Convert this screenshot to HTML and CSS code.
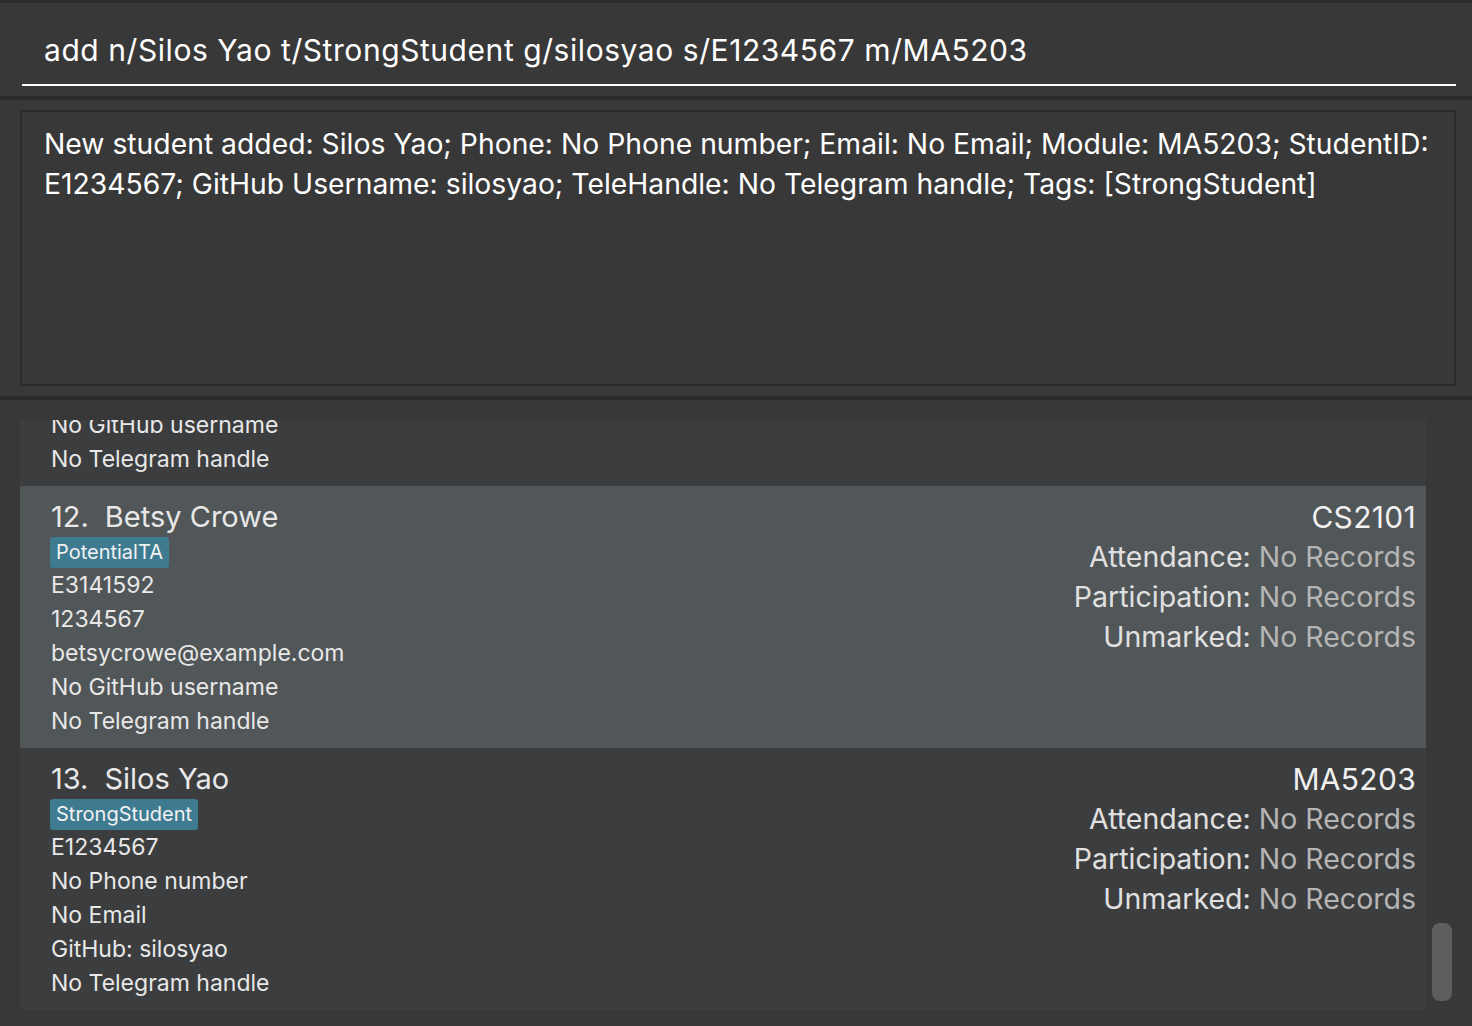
FILE: index.html
```html
<!DOCTYPE html>
<html>
<head>
<meta charset="utf-8">
<link rel="stylesheet" href="styles.css">
</head>
<body>
<div class="app">
  <div class="command-bar">
    <div class="command-input">add n/Silos Yao t/StrongStudent g/silosyao s/E1234567 m/MA5203</div>
  </div>
  <div class="result-area">
    <div class="result-box">New student added: Silos Yao; Phone: No Phone number; Email: No Email; Module: MA5203; StudentID: E1234567; GitHub Username: silosyao; TeleHandle: No Telegram handle; Tags: [StrongStudent]</div>
  </div>
  <div class="list-area">
    <div class="list-viewport">
      <div class="card partial">
        <div class="card-left">
          <div class="detail">No GitHub username</div>
          <div class="detail">No Telegram handle</div>
        </div>
      </div>
      <div class="card selected">
        <div class="card-left">
          <div class="name"><span class="idx">12.</span>Betsy Crowe</div>
          <div class="tags"><span class="tag">PotentialTA</span></div>
          <div class="detail">E3141592</div>
          <div class="detail">1234567</div>
          <div class="detail">betsycrowe@example.com</div>
          <div class="detail">No GitHub username</div>
          <div class="detail">No Telegram handle</div>
        </div>
        <div class="card-right">
          <div class="module">CS2101</div>
          <div class="stat">Attendance: <span class="val">No Records</span></div>
          <div class="stat">Participation: <span class="val">No Records</span></div>
          <div class="stat">Unmarked: <span class="val">No Records</span></div>
        </div>
      </div>
      <div class="card">
        <div class="card-left">
          <div class="name"><span class="idx">13.</span>Silos Yao</div>
          <div class="tags"><span class="tag">StrongStudent</span></div>
          <div class="detail">E1234567</div>
          <div class="detail">No Phone number</div>
          <div class="detail">No Email</div>
          <div class="detail">GitHub: silosyao</div>
          <div class="detail">No Telegram handle</div>
        </div>
        <div class="card-right">
          <div class="module">MA5203</div>
          <div class="stat">Attendance: <span class="val">No Records</span></div>
          <div class="stat">Participation: <span class="val">No Records</span></div>
          <div class="stat">Unmarked: <span class="val">No Records</span></div>
        </div>
      </div>
    </div>
    <div class="scroll-track"><div class="scroll-thumb"></div></div>
  </div>
</div>
</body>
</html>
```
FILE: styles.css
```css
html, body {
  margin: 0;
  padding: 0;
  background: #383838;
}
body {
  width: 1472px;
  height: 1026px;
  overflow: hidden;
  font-family: Inter, "Noto Sans", sans-serif;
}
.app {
  display: flex;
  flex-direction: column;
  height: 1026px;
  border-top: 3px solid #2b2b2b;
  box-sizing: border-box;
}
.command-bar {
  height: 97px;
  flex: none;
  padding: 0 16px 0 22px;
  box-sizing: border-box;
  border-bottom: 4px solid #2b2b2b;
  display: flex;
  align-items: flex-start;
}
.command-input {
  width: 1434px;
  height: 83px;
  box-sizing: border-box;
  padding: 27px 0 0 22px;
  color: #ffffff;
  font-size: 30px;
  letter-spacing: 0.56px;
  line-height: 40px;
  border-bottom: 2px solid #ffffff;
  white-space: nowrap;
}
.result-area {
  height: 300px;
  flex: none;
  box-sizing: border-box;
  padding: 10px 16px 10px 20px;
  border-bottom: 4px solid #2b2b2b;
}
.result-box {
  height: 276px;
  box-sizing: border-box;
  border: 2px solid #2b2b2b;
  padding: 12px 14px 0 22px;
  color: #ffffff;
  font-size: 28.3px;
  line-height: 40px;
}
.list-area {
  flex: 1;
  display: flex;
  padding: 20px 0 16px 20px;
  box-sizing: border-box;
  min-height: 0;
}
.list-viewport {
  width: 1406px;
  overflow: hidden;
  height: 590px;
}
.card {
  height: 262px;
  box-sizing: border-box;
  background: #3c3d3f;
  padding: 11px 10px 10px 31px;
  display: flex;
  justify-content: space-between;
  color: #e8e8e8;
}
.card.partial {
  height: 66px;
  padding-top: 0;
  overflow: hidden;
  align-items: flex-end;
}
.card.selected {
  background: #515658;
}
.name {
  font-size: 29px;
  line-height: 40px;
  white-space: nowrap;
}
.idx {
  margin-right: 16px;
}
.tags {
  display: flex;
  height: 31px;
}
.tag {
  background: #3e7b91;
  color: #f2f2f2;
  font-size: 20px;
  line-height: 31px;
  padding: 0 6px;
  border-radius: 3px;
  margin-left: -1px;
}
.detail {
  font-size: 23px;
  line-height: 34px;
  white-space: nowrap;
}
.card-right {
  text-align: right;
  white-space: nowrap;
}
.module {
  font-size: 30px;
  letter-spacing: 0.3px;
  line-height: 40px;
  color: #f0f0f0;
}
.stat {
  font-size: 28.5px;
  line-height: 40px;
  color: #e0e0e0;
}
.val {
  color: #b5b5b5;
}
.scroll-track {
  width: 46px;
  position: relative;
}
.scroll-thumb {
  position: absolute;
  left: 6px;
  top: 503px;
  width: 20px;
  height: 78px;
  border-radius: 8px;
  background: #5e5e5e;
}
```
